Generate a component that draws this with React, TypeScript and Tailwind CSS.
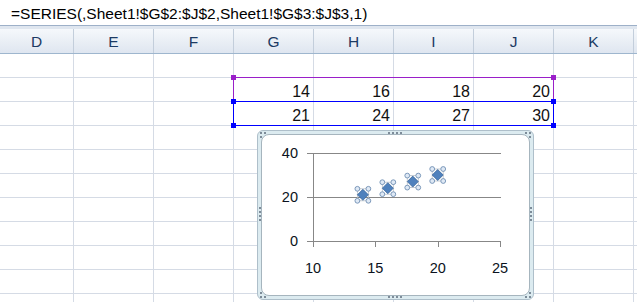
import React from "react";

const cols = ["D", "E", "F", "G", "H", "I", "J", "K", ""];
const widths = ["w-[74px]", "w-[80px]", "w-[80px]", "w-[80px]", "w-[80px]", "w-[80px]", "w-[80px]", "w-[80px]", "w-[23px]"];

const data: Record<number, (number | null)[]> = {
  1: [null, null, null, 14, 16, 18, 20, null, null],
  2: [null, null, null, 21, 24, 27, 30, null, null],
};

// chart scale (local px inside the chart frame)
const sx = (v: number) => 56 + (v - 10) * 12.47;
const sy = (v: number) => 111 - v * 2.2;
const points = [
  [14, 21],
  [16, 24],
  [18, 27],
  [20, 30],
];

function Dots({ x, y, vertical }: { x: number; y: number; vertical?: boolean }) {
  return (
    <>
      {[0, 1, 2, 3].map((i) => (
        <rect
          key={i}
          x={vertical ? x : x + i * 4}
          y={vertical ? y + i * 4 : y}
          width={2}
          height={2}
          fill="#7d8c99"
        />
      ))}
    </>
  );
}

function Corner({ x, y, dx, dy }: { x: number; y: number; dx: number; dy: number }) {
  return (
    <>
      <rect x={x} y={y} width={2} height={2} fill="#7d8c99" />
      <rect x={x + dx * 4} y={y} width={2} height={2} fill="#7d8c99" />
      <rect x={x} y={y + dy * 4} width={2} height={2} fill="#7d8c99" />
    </>
  );
}

function Chart() {
  return (
    <div className="absolute left-[257px] top-[130px] h-[170px] w-[277px] rounded-[6px] border border-[#aebfca] bg-[#dcebf0] p-[3px]">
      <div className="h-full w-full rounded-[8px] border border-[#a6b5be] bg-white" />
      <svg className="absolute -left-px -top-px" width={277} height={170}>
        <Corner x={3} y={2} dx={1} dy={1} />
        <Corner x={272} y={2} dx={-1} dy={1} />
        <Corner x={3} y={166} dx={1} dy={-1} />
        <Corner x={272} y={166} dx={-1} dy={-1} />
        <Dots x={131} y={2} />
        <Dots x={131} y={166} />
        <Dots x={2} y={77} vertical />
        <Dots x={273} y={77} vertical />

        {[23, 67].map((y) => (
          <line key={y} x1={50} x2={244} y1={y + 0.5} y2={y + 0.5} stroke="#878787" />
        ))}
        <line x1={50} x2={244} y1={111.5} y2={111.5} stroke="#878787" />
        <line x1={56.5} x2={56.5} y1={23} y2={117} stroke="#878787" />
        {[118, 181, 243].map((x) => (
          <line key={x} x1={x + 0.5} x2={x + 0.5} y1={111} y2={117} stroke="#878787" />
        ))}

        <g fontFamily='"Liberation Sans", Arial, sans-serif' fontSize={14.5} fill="#0b1220">
          <text x={41} y={28} textAnchor="end">40</text>
          <text x={41} y={72} textAnchor="end">20</text>
          <text x={41} y={116} textAnchor="end">0</text>
          {[10, 15, 20, 25].map((v) => (
            <text key={v} x={sx(v)} y={143} textAnchor="middle">
              {v}
            </text>
          ))}
        </g>

        {points.map(([px, py]) => {
          const cx = sx(px);
          const cy = sy(py);
          return (
            <g key={px}>
              <rect x={cx - 5.5} y={cy - 6} width={11} height={12} fill="none" stroke="#b9c0c8" strokeWidth={0.8} />
              <path
                d={`M ${cx} ${cy - 5.5} L ${cx + 5.5} ${cy} L ${cx} ${cy + 5.5} L ${cx - 5.5} ${cy} Z`}
                fill="#4f81bd"
                stroke="#3b679b"
                strokeWidth={0.8}
              />
              {[
                [-5.5, -6],
                [5.5, -6],
                [-5.5, 6],
                [5.5, 6],
              ].map(([ox, oy], i) => (
                <circle key={i} cx={cx + ox} cy={cy + oy} r={2.4} fill="#dfe9f5" stroke="#6f8fb3" strokeWidth={0.9} />
              ))}
            </g>
          );
        })}
      </svg>
    </div>
  );
}

const handle = "absolute h-[5px] w-[5px]";

// the purple / blue range outline that Excel draws while a series formula is being edited
function RangeBox({ color, bottomHandles }: { color: string; bottomHandles?: boolean }) {
  return (
    <div className={`relative h-[25px] border ${color === "purple" ? "border-[#9a1fc9]" : "border-[#0000ff]"}`}>
      <span className={`${handle} -left-[3px] -top-[3px] ${color === "purple" ? "bg-[#9a1fc9]" : "bg-[#0000ff]"}`} />
      <span className={`${handle} -right-[3px] -top-[3px] ${color === "purple" ? "bg-[#9a1fc9]" : "bg-[#0000ff]"}`} />
      {bottomHandles && (
        <>
          <span className={`${handle} -bottom-[3px] -left-[3px] bg-[#0000ff]`} />
          <span className={`${handle} -bottom-[3px] -right-[3px] bg-[#0000ff]`} />
        </>
      )}
    </div>
  );
}

export default function App() {
  return (
    <div
      className="relative h-[302px] w-[637px] overflow-hidden bg-white text-[#111]"
      style={{ fontFamily: '"Liberation Sans", Arial, sans-serif' }}
    >
      <div className="h-[26px] border-b border-[#9db0c8] pl-[11px] pt-[6px] text-[15.5px] leading-[16px] text-black">
        =SERIES(,Sheet1!$G$2:$J$2,Sheet1!$G$3:$J$3,1)
      </div>
      <div className="h-[3px] bg-[#dfe6ef]" />
      <div className="flex h-[25px] border-b border-[#9eb6ce] bg-gradient-to-b from-[#f5f8fb] to-[#dfe6f0]">
        {cols.map((c, i) => (
          <div
            key={i}
            className={`${widths[i]} flex shrink-0 items-center justify-center border-r border-[#c3cedb] pt-[2px] text-[15.5px] text-[#1c3a63]`}
          >
            {c}
          </div>
        ))}
      </div>
      {Array.from({ length: 11 }).map((_, r) => (
        <div key={r} className="flex h-[24px]">
          {cols.map((_, i) => {
            const v = data[r]?.[i];
            return (
              <div
                key={i}
                className={`${widths[i]} flex shrink-0 items-end justify-end border-b border-r border-[#d5dbe5] pr-[3px] text-[16px] leading-[18px]`}
              >
                {v ?? ""}
              </div>
            );
          })}
        </div>
      ))}

      <div className="absolute left-[233px] top-[77px] flex w-[321px] flex-col">
        <RangeBox color="purple" />
        <div className="-mt-px">
          <RangeBox color="blue" bottomHandles />
        </div>
      </div>

      <Chart />
    </div>
  );
}
